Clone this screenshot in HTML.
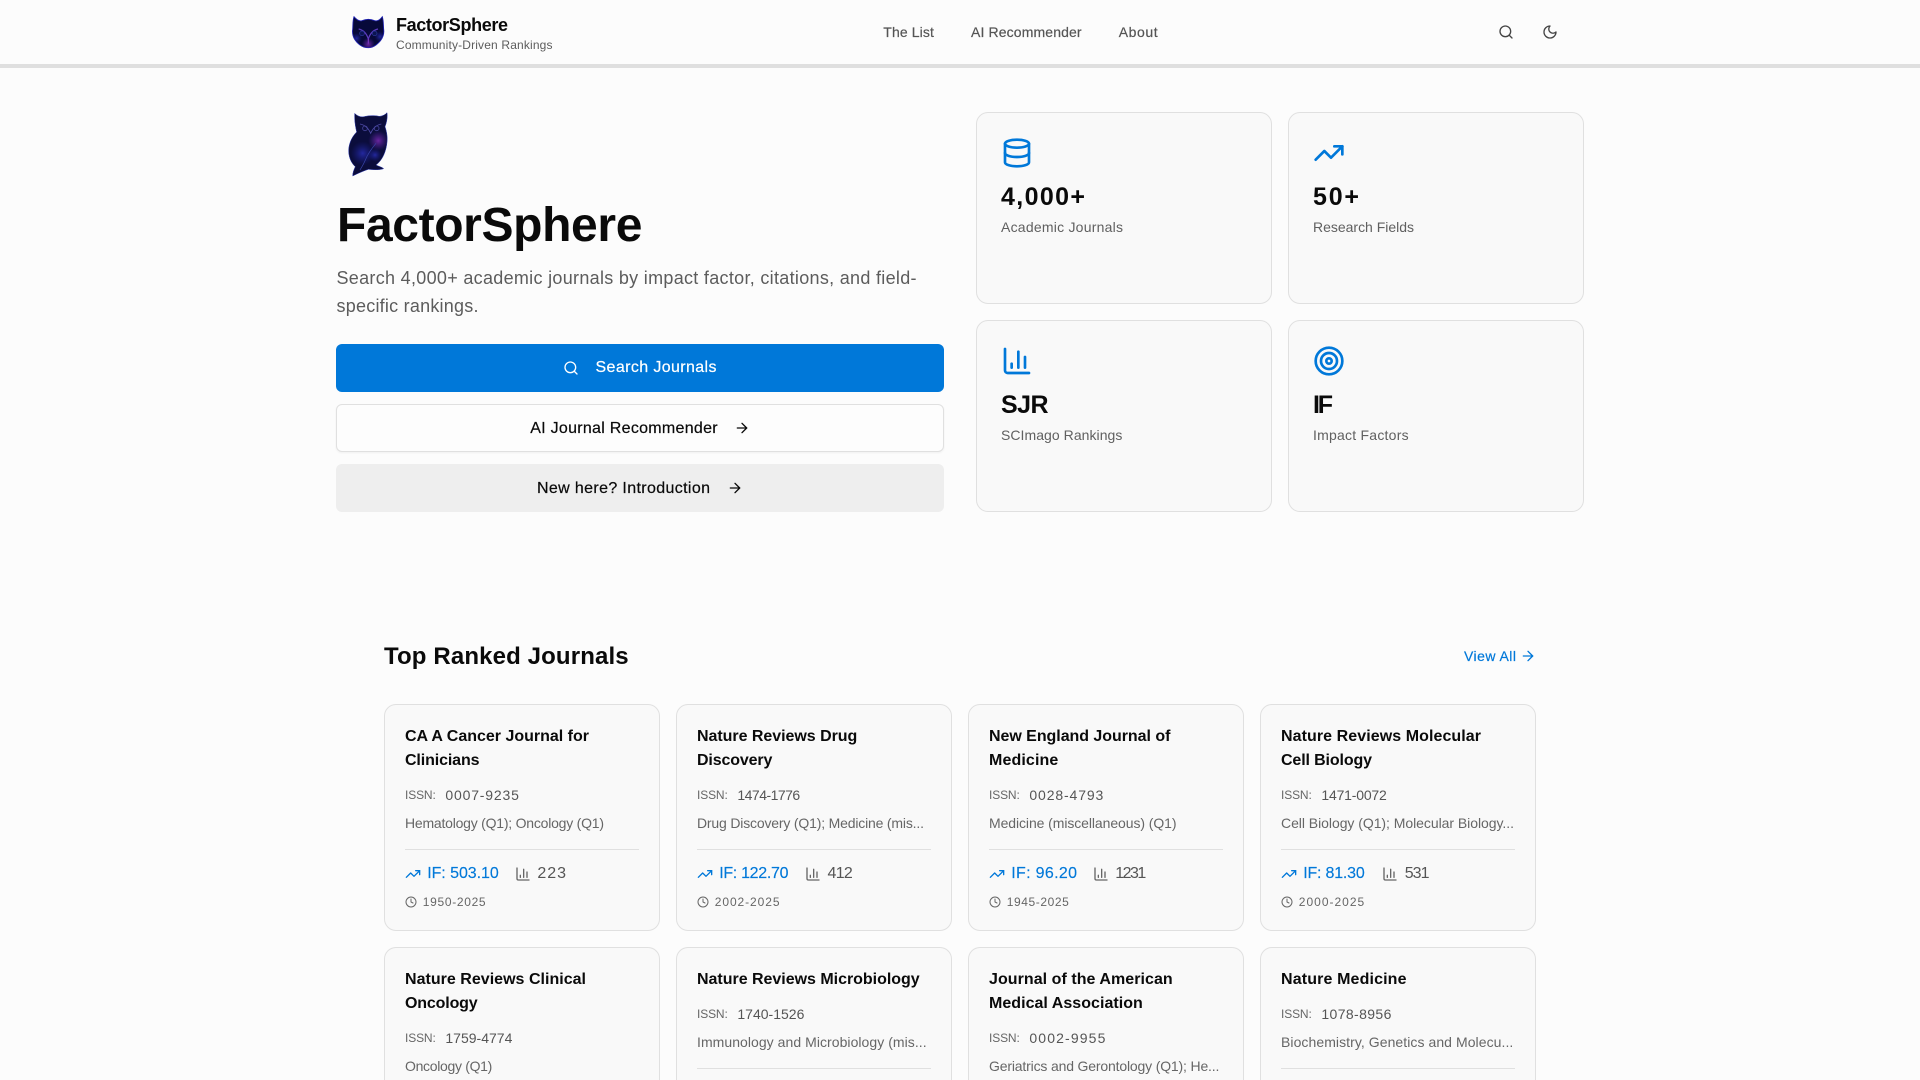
<!DOCTYPE html>
<html lang="en">
<head>
<meta charset="utf-8">
<title>FactorSphere</title>
<style>
*{box-sizing:border-box;margin:0;padding:0}
html,body{width:1920px;height:1080px;overflow:hidden;background:#fcfcfc}
body{position:relative;font-family:"Liberation Sans",Arial,sans-serif;color:#0a0a0a}
a{color:inherit;text-decoration:none}
.t{position:absolute;display:inline-block;white-space:nowrap;line-height:20px;font-weight:400}
.m{-webkit-text-stroke:.2px currentColor}
.b{font-weight:700}
.i{position:absolute;fill:none;stroke:currentColor;stroke-width:2;stroke-linecap:round;stroke-linejoin:round}
header{position:absolute;left:0;top:0;width:1920px;height:68px;background:#fcfcfc;border-bottom:4px solid #dfdfdf}
.nav{font-size:14px;color:#555;top:22px}
.btn{position:absolute;left:336px;width:608px;height:48px;border-radius:6px;display:block}
.btn .t{font-size:16px}
.stat{position:absolute;width:296px;height:192px;background:#f9f9f9;border:1px solid #e0e0e0;border-radius:12px}
.stat .i{left:24px;top:24px;width:32px;height:32px;color:#0078d9}
.stat .v{left:24px;top:74px;font-size:25px;font-weight:700}
.stat .l{left:24px;top:104.2px;font-size:14px;color:#606060}
.card{position:absolute;width:276px;height:227px;background:#f9f9f9;border:1px solid #e0e0e0;border-radius:12px}
.cut{height:133px;border-bottom:0;border-radius:12px 12px 0 0}
.card h3{font-size:16px;font-weight:700;color:#0a0a0a;left:20px}
.l1{top:22px}.l2{top:46px}
.il{left:20px;top:80.3px;font-size:12px;color:#666}
.iv{left:60.4px;top:80.2px;font-size:14px;color:#555}
.su{left:20px;top:108.2px;font-size:14px;color:#666}
.dv{position:absolute;left:20px;top:144px;width:234px;height:1px;background:#e0e0e0}
.up .il{top:56.3px}.up .iv{top:56.2px}.up .su{top:84.2px}.up .dv{top:120px}
.if{left:42.2px;top:159px;font-size:16px;color:#0078d9;-webkit-text-stroke:.15px #0078d9}
.nm{top:159px;font-size:16px;color:#555}
.dt{left:37.8px;top:186.8px;font-size:12px;color:#666}
.i1{left:19.5px;top:161px;width:16px;height:16px;color:#0078d9}
.i2{top:161px;width:16px;height:16px;color:#666}
.i3{left:20px;top:191px;width:12px;height:12px;color:#666}
</style>
</head>
<body>
<svg width="0" height="0" style="position:absolute">
  <defs>
    <symbol id="search" viewBox="0 0 24 24"><circle cx="11" cy="11" r="8"/><path d="m21 21-4.3-4.3"/></symbol>
    <symbol id="moon" viewBox="0 0 24 24"><path d="M12 3a6 6 0 0 0 9 9 9 9 0 1 1-9-9Z"/></symbol>
    <symbol id="arrow" viewBox="0 0 24 24"><path d="M5 12h14"/><path d="m12 5 7 7-7 7"/></symbol>
    <symbol id="db" viewBox="0 0 24 24"><ellipse cx="12" cy="5" rx="9" ry="3"/><path d="M3 5V19A9 3 0 0 0 21 19V5"/><path d="M3 12A9 3 0 0 0 21 12"/></symbol>
    <symbol id="trend" viewBox="0 0 24 24"><polyline points="22 7 13.5 15.5 8.5 10.5 2 17"/><polyline points="16 7 22 7 22 13"/></symbol>
    <symbol id="chart" viewBox="0 0 24 24"><path d="M3 3v16a2 2 0 0 0 2 2h16"/><path d="M18 17V9"/><path d="M13 17V5"/><path d="M8 17v-3"/></symbol>
    <symbol id="target" viewBox="0 0 24 24"><circle cx="12" cy="12" r="10"/><circle cx="12" cy="12" r="6"/><circle cx="12" cy="12" r="2"/></symbol>
    <symbol id="clock" viewBox="0 0 24 24"><circle cx="12" cy="12" r="10"/><polyline points="12 6 12 12 16 14"/></symbol>
    <radialGradient id="neb1"><stop offset="0" stop-color="#7a2ab0" stop-opacity=".85"/><stop offset="1" stop-color="#5a22a0" stop-opacity="0"/></radialGradient>
    <radialGradient id="neb2"><stop offset="0" stop-color="#2a2fb8" stop-opacity=".8"/><stop offset="1" stop-color="#1a1f90" stop-opacity="0"/></radialGradient>
    <clipPath id="owlclip"><path d="M44 40 C52 48 62 52 72 50 C88 46 104 46 118 49 C128 48 136 44 141 38 C143 52 140 68 135 80 C142 100 144 120 138 145 C132 170 120 186 108 195 C116 199 126 201 131 206 C118 211 100 209 85 208 C72 212 50 222 38 228 C38 218 42 208 46 200 C32 188 25 168 26 148 C28 125 38 108 50 96 C46 80 43 60 44 40Z"/></clipPath>
    <clipPath id="headclip"><path d="M42 35 C48 42 56 50 66 47 C78 42 92 42 104 47 C114 50 122 42 127 35 C131 48 130 60 131 72 C134 92 124 108 108 120 C100 126 92 128 85 128 C76 128 68 126 60 120 C44 108 35 92 38 72 C39 58 38 46 42 35Z"/></clipPath>
  </defs>
</svg>

<header>
  <svg style="position:absolute;left:340px;top:5px" width="60" height="60" viewBox="0 0 180 180" aria-hidden="true">
    <path d="M42 35 C48 42 56 50 66 47 C78 42 92 42 104 47 C114 50 122 42 127 35 C131 48 130 60 131 72 C134 92 124 108 108 120 C100 126 92 128 85 128 C76 128 68 126 60 120 C44 108 35 92 38 72 C39 58 38 46 42 35Z" fill="#07093a" stroke="#1e20b0" stroke-width="2.5"/>
    <g clip-path="url(#headclip)">
      <circle cx="85" cy="118" r="20" fill="url(#neb1)"/>
      <circle cx="50" cy="100" r="16" fill="url(#neb2)"/>
      <circle cx="120" cy="95" r="16" fill="url(#neb2)"/>
    </g>
    <path d="M56 72 C66 74 78 80 85 102 C92 80 104 74 114 72" fill="none" stroke="#5f3cc0" stroke-width="3.5"/>
    <path d="M85 102 L85 116" stroke="#7a38c0" stroke-width="3.5"/>
    <circle cx="66" cy="85" r="7" fill="#0b1450" stroke="#2a3aa0" stroke-width="2"/>
    <circle cx="104" cy="85" r="7" fill="#0b1450" stroke="#2a3aa0" stroke-width="2"/>
  </svg>
  <a href="#"><span class="t b" style="left:396px;top:15px;font-size:18px;--w:112px">FactorSphere</span></a>
  <span class="t" style="left:396px;top:35px;font-size:12px;color:#5c5c5c;--w:156.5px">Community-Driven Rankings</span>
  <nav>
    <a href="#"><span class="t nav m" style="left:883.3px;--w:50.6px">The List</span></a>
    <a href="#"><span class="t nav m" style="left:971px;--w:110.6px">AI Recommender</span></a>
    <a href="#"><span class="t nav m" style="left:1118.8px;--w:38.8px">About</span></a>
  </nav>
  <svg class="i" style="left:1498px;top:24px;color:#444" width="16" height="16"><use href="#search"/></svg>
  <svg class="i" style="left:1542px;top:24px;color:#444" width="16" height="16"><use href="#moon"/></svg>
</header>

<main>
  <section>
    <svg style="position:absolute;left:340px;top:100px" width="70" height="90" viewBox="0 0 210 270" aria-hidden="true">
      <path d="M44 40 C52 48 62 52 72 50 C88 46 104 46 118 49 C128 48 136 44 141 38 C143 52 140 68 135 80 C142 100 144 120 138 145 C132 170 120 186 108 195 C116 199 126 201 131 206 C118 211 100 209 85 208 C72 212 50 222 38 228 C38 218 42 208 46 200 C32 188 25 168 26 148 C28 125 38 108 50 96 C46 80 43 60 44 40Z" fill="#0b0d3c" stroke="#2f3cb0" stroke-width="1.5"/>
      <g clip-path="url(#owlclip)">
        <circle cx="115" cy="122" r="30" fill="url(#neb1)"/>
        <circle cx="68" cy="160" r="36" fill="url(#neb2)"/>
        <circle cx="105" cy="165" r="20" fill="url(#neb2)"/>
      </g>
      <path d="M60 72 C72 74 84 82 92 100 C100 82 112 74 124 72" fill="none" stroke="#4f4aa8" stroke-width="2.5"/>
      <circle cx="75" cy="85" r="7" fill="none" stroke="#46459c" stroke-width="2.5"/>
      <circle cx="110" cy="85" r="7" fill="none" stroke="#46459c" stroke-width="2.5"/>
      <path d="M108 130 C98 142 84 160 76 180 C72 190 66 200 60 210" fill="none" stroke="#3a46ac" stroke-width="2"/>
    </svg>
    <h1 class="t b" style="left:337px;top:215.5px;font-size:48px;--w:305.4px;color:#0a0a0a">FactorSphere</h1>
    <p class="t" style="left:336.5px;top:267.8px;font-size:18px;color:#5c5c5c;--w:580px">Search 4,000+ academic journals by impact factor, citations, and field-</p>
    <p class="t" style="left:336.5px;top:295.8px;font-size:18px;color:#5c5c5c;--w:142px">specific rankings.</p>

    <a href="#" class="btn" style="top:344px;background:#0078d9;color:#fff">
      <svg class="i" style="left:227px;top:16px" width="16" height="16"><use href="#search"/></svg>
      <span class="t m" style="left:259.5px;top:14px;--w:121px">Search Journals</span>
    </a>
    <a href="#" class="btn" style="top:404px;background:#fdfdfd;border:1px solid #e0e0e0;box-shadow:0 1px 2px rgba(0,0,0,.05)">
      <span class="t m" style="left:193.2px;top:13.6px;--w:187.4px">AI Journal Recommender</span>
      <svg class="i" style="left:396.5px;top:15px" width="16" height="16"><use href="#arrow"/></svg>
    </a>
    <a href="#" class="btn" style="top:464px;background:#eeeeee">
      <span class="t m" style="left:201px;top:14.6px;--w:173px">New here? Introduction</span>
      <svg class="i" style="left:390.7px;top:16px" width="16" height="16"><use href="#arrow"/></svg>
    </a>

    <div class="stat" style="left:976px;top:112px">
      <svg class="i"><use href="#db"/></svg>
      <div class="t v" style="--w:84px">4,000+</div>
      <div class="t l" style="--w:122px">Academic Journals</div>
    </div>
    <div class="stat" style="left:1288px;top:112px">
      <svg class="i"><use href="#trend"/></svg>
      <div class="t v" style="--w:46px">50+</div>
      <div class="t l" style="--w:101px">Research Fields</div>
    </div>
    <div class="stat" style="left:976px;top:320px">
      <svg class="i"><use href="#chart"/></svg>
      <div class="t v" style="--w:47.6px">SJR</div>
      <div class="t l" style="--w:121.4px">SCImago Rankings</div>
    </div>
    <div class="stat" style="left:1288px;top:320px">
      <svg class="i"><use href="#target"/></svg>
      <div class="t v" style="--w:20px">IF</div>
      <div class="t l" style="--w:95.6px">Impact Factors</div>
    </div>
  </section>

  <section>
    <h2 class="t b" style="left:384px;top:646.5px;font-size:24px;--w:244.6px">Top Ranked Journals</h2>
    <a href="#" style="color:#0078d9">
      <span class="t m" style="left:1464px;top:646px;font-size:14px;--w:52px">View All</span>
      <svg class="i" style="left:1519.6px;top:648px" width="16" height="16"><use href="#arrow"/></svg>
    </a>

    <article class="card" style="left:384px;top:704px">
      <h3 class="t l1" style="--w:184px">CA A Cancer Journal for</h3>
      <h3 class="t l2" style="--w:74.5px">Clinicians</h3>
      <span class="t il" style="--w:30.8px">ISSN:</span><span class="t iv" style="--w:73.5px">0007-9235</span>
      <span class="t su" style="--w:199px">Hematology (Q1); Oncology (Q1)</span>
      <div class="dv"></div>
      <svg class="i i1"><use href="#trend"/></svg><span class="t if" style="--w:71.6px">IF: 503.10</span>
      <svg class="i i2" style="left:129.5px"><use href="#chart"/></svg><span class="t nm" style="left:152.4px;--w:28.7px">223</span>
      <svg class="i i3"><use href="#clock"/></svg><span class="t dt" style="--w:62.8px">1950-2025</span>
    </article>

    <article class="card" style="left:676px;top:704px">
      <h3 class="t l1" style="--w:160.3px">Nature Reviews Drug</h3>
      <h3 class="t l2" style="--w:75.4px">Discovery</h3>
      <span class="t il" style="--w:30.8px">ISSN:</span><span class="t iv" style="--w:62.8px">1474-1776</span>
      <span class="t su" style="--w:227px">Drug Discovery (Q1); Medicine (mis...</span>
      <div class="dv"></div>
      <svg class="i i1"><use href="#trend"/></svg><span class="t if" style="--w:69.3px">IF: 122.70</span>
      <svg class="i i2" style="left:127.7px"><use href="#chart"/></svg><span class="t nm" style="left:150.5px;--w:25.3px">412</span>
      <svg class="i i3"><use href="#clock"/></svg><span class="t dt" style="--w:64.7px">2002-2025</span>
    </article>

    <article class="card" style="left:968px;top:704px">
      <h3 class="t l1" style="--w:181.4px">New England Journal of</h3>
      <h3 class="t l2" style="--w:69.3px">Medicine</h3>
      <span class="t il" style="--w:30.8px">ISSN:</span><span class="t iv" style="--w:73.9px">0028-4793</span>
      <span class="t su" style="--w:187.5px">Medicine (miscellaneous) (Q1)</span>
      <div class="dv"></div>
      <svg class="i i1"><use href="#trend"/></svg><span class="t if" style="--w:65.8px">IF: 96.20</span>
      <svg class="i i2" style="left:123.7px"><use href="#chart"/></svg><span class="t nm" style="left:146.3px;--w:31px">1231</span>
      <svg class="i i3"><use href="#clock"/></svg><span class="t dt" style="--w:62px">1945-2025</span>
    </article>

    <article class="card" style="left:1260px;top:704px">
      <h3 class="t l1" style="--w:200px">Nature Reviews Molecular</h3>
      <h3 class="t l2" style="--w:91px">Cell Biology</h3>
      <span class="t il" style="--w:30.8px">ISSN:</span><span class="t iv" style="--w:65.4px">1471-0072</span>
      <span class="t su" style="--w:233px">Cell Biology (Q1); Molecular Biology...</span>
      <div class="dv"></div>
      <svg class="i i1"><use href="#trend"/></svg><span class="t if" style="--w:61.6px">IF: 81.30</span>
      <svg class="i i2" style="left:120.8px"><use href="#chart"/></svg><span class="t nm" style="left:143.7px;--w:24.9px">531</span>
      <svg class="i i3"><use href="#clock"/></svg><span class="t dt" style="--w:65.4px">2000-2025</span>
    </article>

    <article class="card cut" style="left:384px;top:947px">
      <h3 class="t l1" style="--w:181px">Nature Reviews Clinical</h3>
      <h3 class="t l2" style="--w:72.7px">Oncology</h3>
      <span class="t il" style="--w:30.8px">ISSN:</span><span class="t iv" style="--w:67px">1759-4774</span>
      <span class="t su" style="--w:87.3px">Oncology (Q1)</span>
    </article>

    <article class="card cut up" style="left:676px;top:947px">
      <h3 class="t l1" style="--w:222.7px">Nature Reviews Microbiology</h3>
      <span class="t il" style="--w:30.8px">ISSN:</span><span class="t iv" style="--w:67px">1740-1526</span>
      <span class="t su" style="--w:229.6px">Immunology and Microbiology (mis...</span>
      <div class="dv"></div>
    </article>

    <article class="card cut" style="left:968px;top:947px">
      <h3 class="t l1" style="--w:183.7px">Journal of the American</h3>
      <h3 class="t l2" style="--w:153.8px">Medical Association</h3>
      <span class="t il" style="--w:30.8px">ISSN:</span><span class="t iv" style="--w:76px">0002-9955</span>
      <span class="t su" style="--w:230.4px">Geriatrics and Gerontology (Q1); He...</span>
    </article>

    <article class="card cut up" style="left:1260px;top:947px">
      <h3 class="t l1" style="--w:125.5px">Nature Medicine</h3>
      <span class="t il" style="--w:30.8px">ISSN:</span><span class="t iv" style="--w:70px">1078-8956</span>
      <span class="t su" style="--w:232.3px">Biochemistry, Genetics and Molecu...</span>
      <div class="dv"></div>
    </article>
  </section>
</main>
<script>
document.querySelectorAll('.t').forEach(function(e){
  var w=parseFloat(getComputedStyle(e).getPropertyValue('--w'));
  if(!w)return;
  var n=e.textContent.length;
  if(n<2)return;
  var m=e.getBoundingClientRect().width;
  e.style.letterSpacing=((w-m)/(n-1)).toFixed(3)+'px';
});
</script>
</body>
</html>
